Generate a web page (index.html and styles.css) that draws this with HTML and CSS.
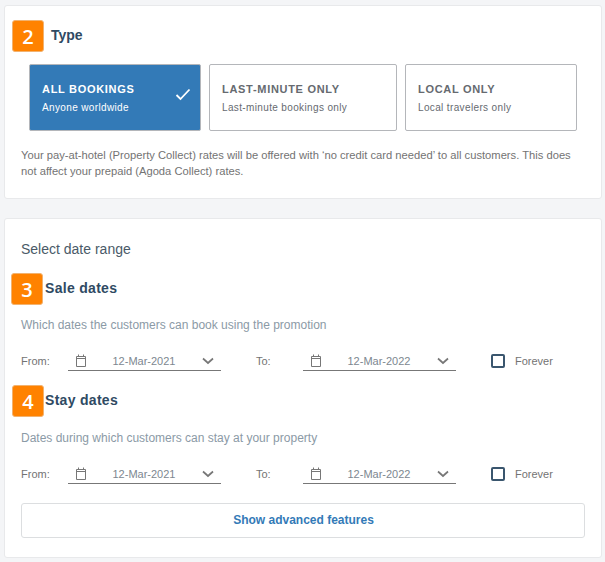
FILE: index.html
```html
<!DOCTYPE html>
<html lang="en">
<head>
<meta charset="utf-8">
<title>Promotion settings</title>
<link rel="stylesheet" href="styles.css">
</head>
<body>
<main class="page">
  <section class="card card-type">
    <div class="type-head">
      <span class="badge">2</span>
      <h2 class="type-title">Type</h2>
    </div>
    <div class="options">
      <div class="option option-active">
        <div class="option-title">ALL BOOKINGS</div>
        <div class="option-sub">Anyone worldwide</div>
        <svg class="check" width="16" height="13" viewBox="0 0 16 13"><path d="M1.5 7 L5.5 11 L14.5 1.5" fill="none" stroke="#fff" stroke-width="1.8"/></svg>
      </div>
      <div class="option option-wide">
        <div class="option-title">LAST-MINUTE ONLY</div>
        <div class="option-sub">Last-minute bookings only</div>
      </div>
      <div class="option">
        <div class="option-title">LOCAL ONLY</div>
        <div class="option-sub">Local travelers only</div>
      </div>
    </div>
    <p class="note">Your pay-at-hotel (Property Collect) rates will be offered with ‘no credit card needed’ to all customers. This does not affect your prepaid (Agoda Collect) rates.</p>
  </section>

  <section class="card card-dates">
    <h2 class="range-title">Select date range</h2>

    <div class="date-head date-head-sale">
      <span class="badge">3</span>
      <h3 class="date-title">Sale dates</h3>
    </div>
    <p class="hint">Which dates the customers can book using the promotion</p>
    <div class="date-row">
      <span class="lbl lbl-from">From:</span>
      <div class="picker">
        <svg class="cal" width="12" height="13" viewBox="0 0 12 13"><path d="M1.5 2.5H10.5V12.5H1.5Z M1.5 4.5H10.5 M3.5 .5V2.5 M8.5 .5V2.5" fill="none" stroke="#777" stroke-width="1"/></svg>
        <span class="picker-date">12-Mar-2021</span>
        <svg class="chev" width="12" height="8" viewBox="0 0 12 8"><path d="M1 1.5 L6 6 L11 1.5" fill="none" stroke="#777" stroke-width="1.7"/></svg>
      </div>
      <span class="lbl lbl-to">To:</span>
      <div class="picker">
        <svg class="cal" width="12" height="13" viewBox="0 0 12 13"><path d="M1.5 2.5H10.5V12.5H1.5Z M1.5 4.5H10.5 M3.5 .5V2.5 M8.5 .5V2.5" fill="none" stroke="#777" stroke-width="1"/></svg>
        <span class="picker-date">12-Mar-2022</span>
        <svg class="chev" width="12" height="8" viewBox="0 0 12 8"><path d="M1 1.5 L6 6 L11 1.5" fill="none" stroke="#777" stroke-width="1.7"/></svg>
      </div>
      <span class="box"></span>
      <span class="lbl">Forever</span>
    </div>

    <div class="date-head date-head-stay">
      <span class="badge">4</span>
      <h3 class="date-title">Stay dates</h3>
    </div>
    <p class="hint hint-stay">Dates during which customers can stay at your property</p>
    <div class="date-row">
      <span class="lbl lbl-from">From:</span>
      <div class="picker">
        <svg class="cal" width="12" height="13" viewBox="0 0 12 13"><path d="M1.5 2.5H10.5V12.5H1.5Z M1.5 4.5H10.5 M3.5 .5V2.5 M8.5 .5V2.5" fill="none" stroke="#777" stroke-width="1"/></svg>
        <span class="picker-date">12-Mar-2021</span>
        <svg class="chev" width="12" height="8" viewBox="0 0 12 8"><path d="M1 1.5 L6 6 L11 1.5" fill="none" stroke="#777" stroke-width="1.7"/></svg>
      </div>
      <span class="lbl lbl-to">To:</span>
      <div class="picker">
        <svg class="cal" width="12" height="13" viewBox="0 0 12 13"><path d="M1.5 2.5H10.5V12.5H1.5Z M1.5 4.5H10.5 M3.5 .5V2.5 M8.5 .5V2.5" fill="none" stroke="#777" stroke-width="1"/></svg>
        <span class="picker-date">12-Mar-2022</span>
        <svg class="chev" width="12" height="8" viewBox="0 0 12 8"><path d="M1 1.5 L6 6 L11 1.5" fill="none" stroke="#777" stroke-width="1.7"/></svg>
      </div>
      <span class="box"></span>
      <span class="lbl">Forever</span>
    </div>

    <button class="advanced" type="button">Show advanced features</button>
  </section>
</main>
</body>
</html>
```

FILE: styles.css
```css
* { box-sizing: border-box; }
html, body { margin: 0; padding: 0; }
body {
  background: #f4f5f7;
  font-family: "Liberation Sans", Arial, sans-serif;
  color: #737373;
  height: 562px;
  overflow: hidden;
}
.page {
  display: flex;
  flex-direction: column;
  gap: 19px;
  padding: 5px 3px 0 4px;
}
.card {
  background: #fff;
  border: 1px solid #e8e9eb;
  border-radius: 3px;
}
.card-type { height: 194px; }
.card-dates { height: 340px; padding: 0 16px; }

.badge {
  flex: none;
  width: 32px;
  height: 32px;
  display: flex;
  align-items: center;
  justify-content: center;
  background: #ff8200;
  border: 1px solid #f2b26f;
  border-radius: 3px;
  color: #fff;
  font-family: "Open Sans", sans-serif;
  font-size: 20px;
  font-weight: 600;
}

.type-head {
  display: flex;
  align-items: center;
  gap: 7px;
  margin: 14px 0 0 7px;
}
.type-title {
  margin: 0 0 2px;
  font-size: 14px;
  font-weight: 700;
  color: #2f4a63;
}
.options {
  display: flex;
  gap: 8px;
  margin: 12px 0 0 24px;
}
.option {
  position: relative;
  flex: none;
  width: 172px;
  height: 67px;
  padding: 17px 12px 0;
  border: 1px solid #b4b6ba;
  border-radius: 2px;
  background: #fff;
  color: #666a70;
}
.option-wide { width: 188px; }
.option-active {
  background: #337ab7;
  color: #fff;
}
.option-title {
  font-size: 11px;
  line-height: 14px;
  font-weight: 700;
  letter-spacing: .7px;
}
.option-sub {
  margin-top: 6px;
  font-size: 10px;
  line-height: 12px;
  letter-spacing: .36px;
}
.check {
  position: absolute;
  right: 9px;
  top: 23px;
}
.note {
  margin: 16px 22px 0 16px;
  font-size: 11.2px;
  line-height: 16px;
  color: #737373;
}

.range-title {
  margin: 21px 0 0;
  font-size: 14px;
  line-height: 18px;
  font-weight: 400;
  color: #4a5a68;
}
.date-head {
  display: flex;
  align-items: center;
  gap: 2px;
}
.date-head-sale { margin: 15px 0 0 -10px; }
.date-head-stay { margin: 15px 0 0 -9px; gap: 1px; }
.date-title {
  margin: 0 0 2px;
  font-size: 14px;
  font-weight: 700;
  letter-spacing: .3px;
  color: #2f4a63;
}
.hint {
  margin: 13px 0 0;
  font-size: 12px;
  line-height: 14px;
  color: #8b9aa6;
}
.hint-stay { margin-top: 14px; }
.date-row {
  display: flex;
  align-items: center;
  height: 18px;
  margin-top: 20px;
}
.lbl {
  font-size: 11px;
  color: #737373;
}
.lbl-from { width: 47px; }
.lbl-to { width: 47px; margin-left: 35px; }
.picker {
  display: flex;
  align-items: center;
  width: 153px;
  height: 19px;
  padding: 0 7px;
  border-bottom: 1px solid #777;
}
.picker-date {
  flex: 1;
  text-align: center;
  font-size: 11px;
  color: #7d8790;
}
.chev { margin-left: 1px; }
.box {
  width: 14px;
  height: 14px;
  margin: 0 10px 0 35px;
  border: 2px solid #3a566e;
  border-radius: 2px;
}
.advanced {
  display: block;
  width: 564px;
  height: 35px;
  margin-top: 20px;
  padding: 0 0 2px 1px;
  background: #fff;
  border: 1px solid #dcdee0;
  border-radius: 3px;
  font-family: inherit;
  font-size: 12px;
  font-weight: 700;
  color: #337ab7;
}
```
